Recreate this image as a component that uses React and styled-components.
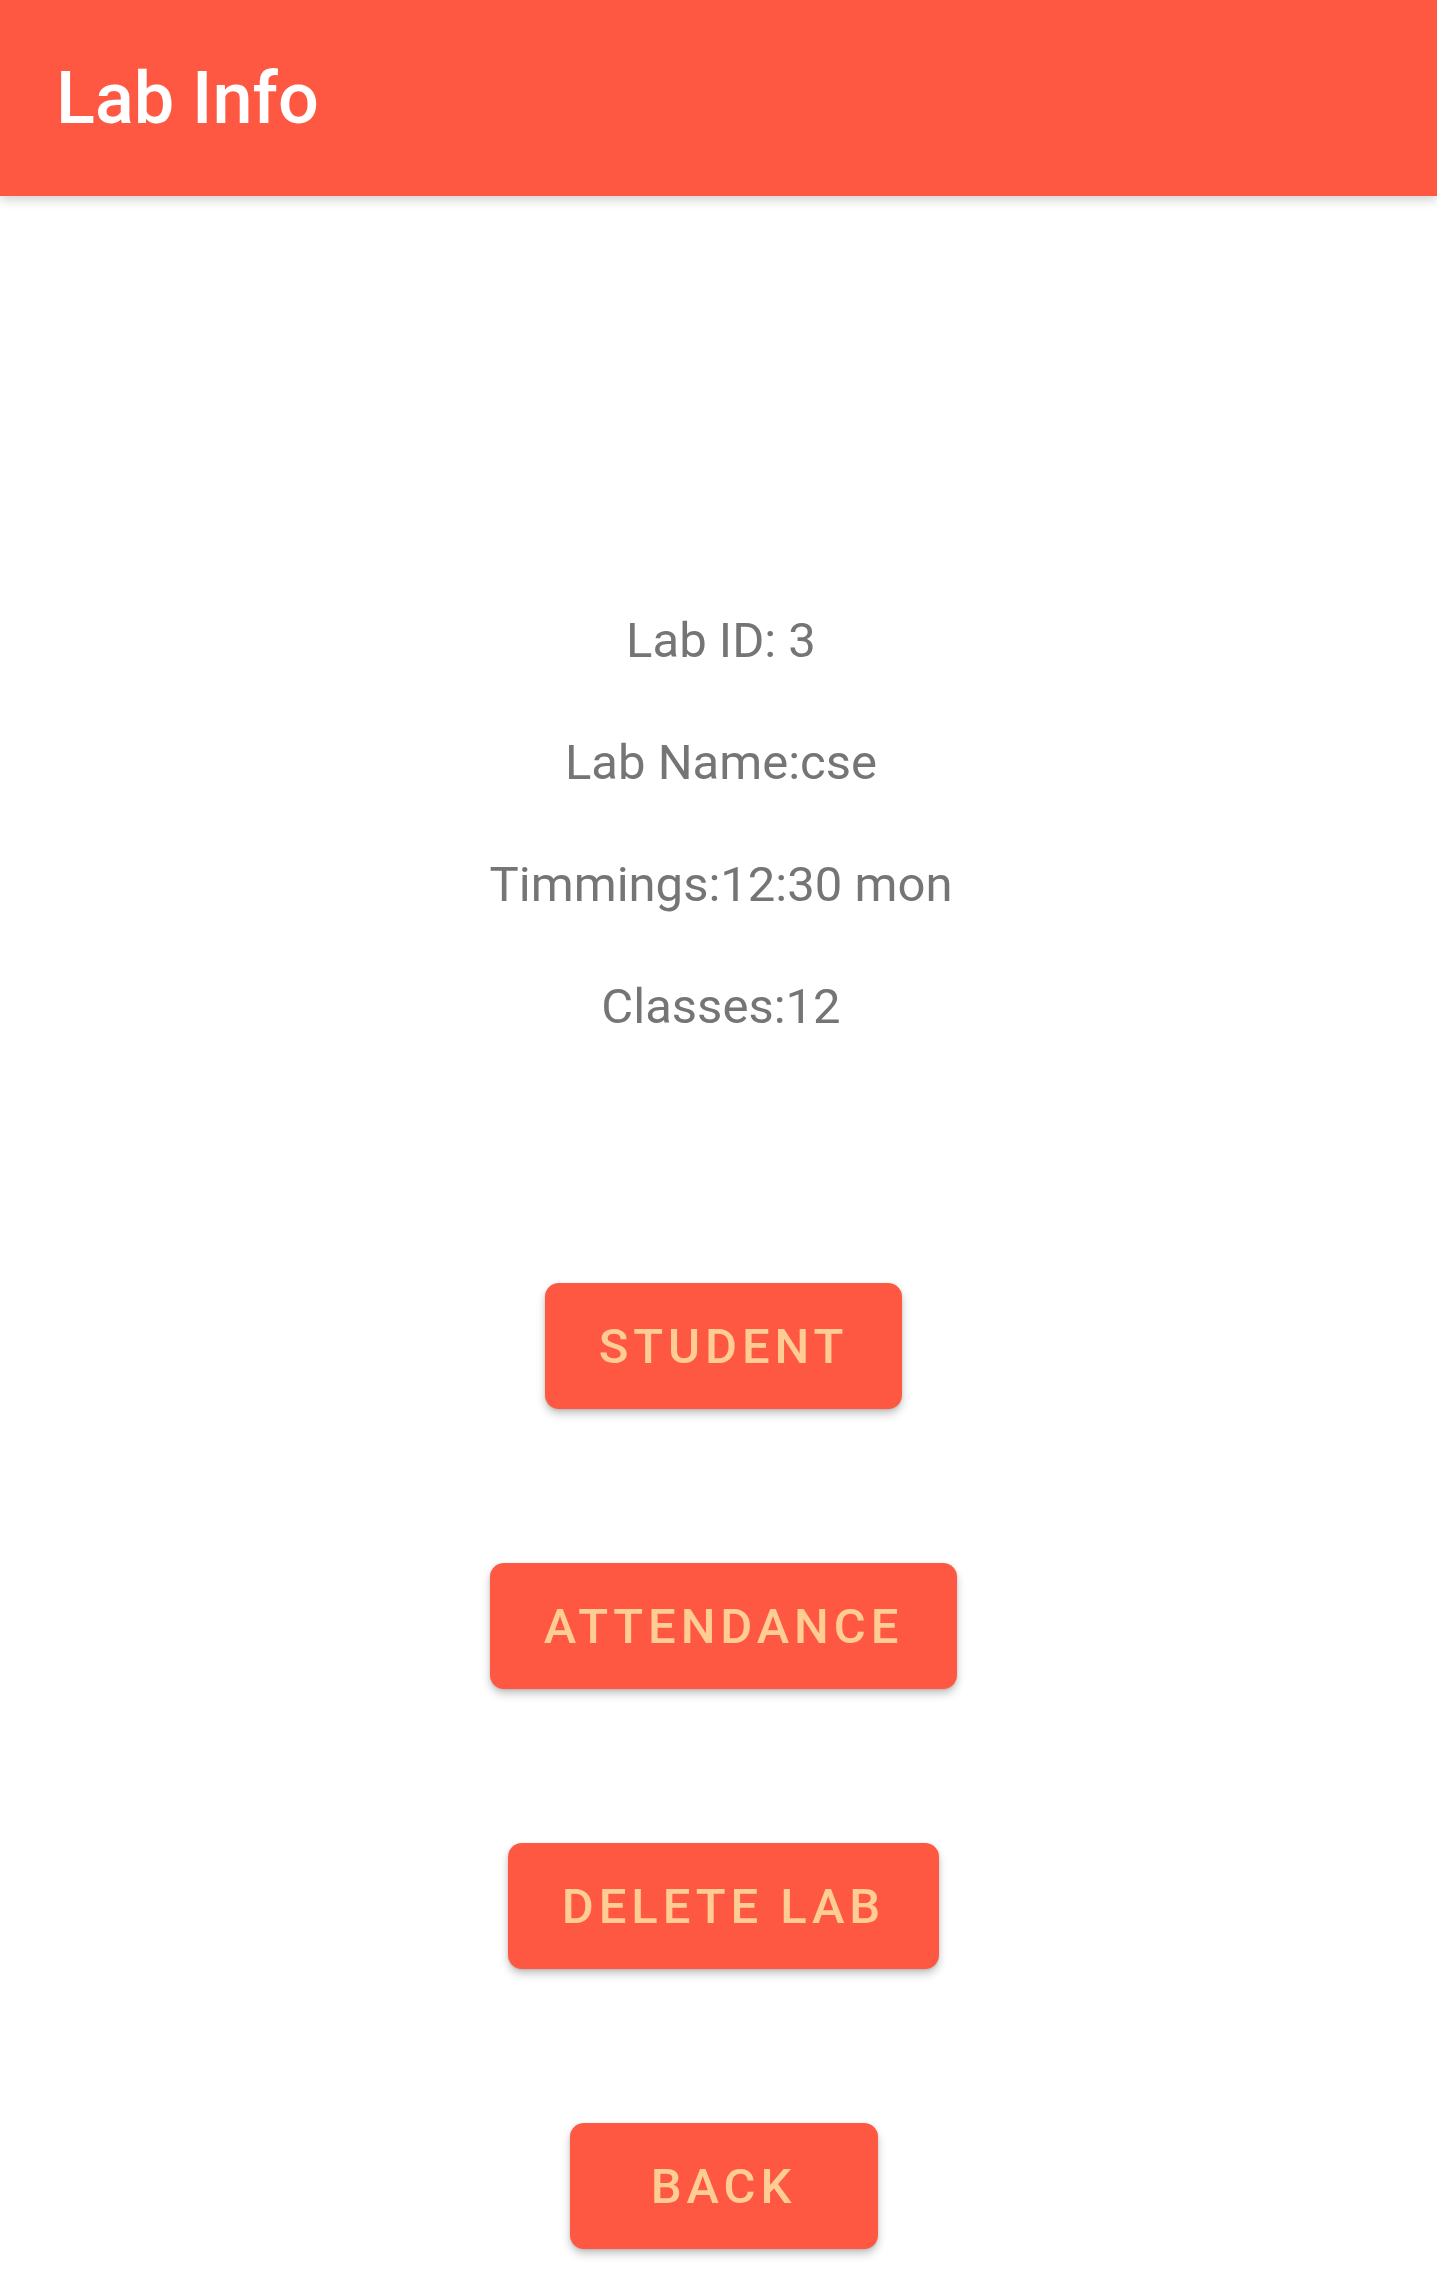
import React from "react";
import styled, { createGlobalStyle } from "styled-components";

const GlobalStyle = createGlobalStyle`
  html, body {
    margin: 0;
    padding: 0;
    background: #ffffff;
    font-family: Roboto, "Noto Sans", "Liberation Sans", sans-serif;
  }
`;

const Screen = styled.div`
  width: 1437px;
  min-height: 2292px;
  background: #ffffff;
  display: flex;
  flex-direction: column;
`;

const AppBar = styled.header`
  height: 196px;
  background-color: #ff5842;
  display: flex;
  align-items: center;
  padding-left: 56px;
  box-shadow: 0 4px 10px rgba(0, 0, 0, 0.18);
  position: relative;
  z-index: 1;
`;

const Title = styled.h1`
  margin: 0;
  color: #ffffff;
  font-size: 72px;
  font-weight: 500;
  letter-spacing: 0;
`;

const InfoList = styled.section`
  display: flex;
  flex-direction: column;
  align-items: center;
  padding-top: 415px;
  padding-left: 5px;
  gap: 62px;
`;

const InfoLine = styled.p`
  margin: 0;
  font-size: 49px;
  line-height: 60px;
  color: #757575;
`;

const Actions = styled.div`
  display: flex;
  flex-direction: column;
  align-items: center;
  padding-top: 246px;
  padding-left: 10px;
  gap: 154px;
`;

const ActionButton = styled.button`
  height: 126px;
  min-width: 308px;
  padding: 0 54px;
  border: none;
  border-radius: 14px;
  background-color: #ff5842;
  color: #fecd96;
  font-family: inherit;
  font-size: 49px;
  font-weight: 500;
  letter-spacing: 0.1em;
  text-transform: uppercase;
  box-shadow: 0 5px 8px rgba(0, 0, 0, 0.22), 0 1px 3px rgba(0, 0, 0, 0.12);
  cursor: pointer;
`;

const info = ["Lab ID: 3", "Lab Name:cse", "Timmings:12:30 mon", "Classes:12"];
const actions = ["Student", "Attendance", "Delete Lab", "Back"];

function App() {
  return (
    <Screen>
      <GlobalStyle />
      <AppBar>
        <Title>Lab Info</Title>
      </AppBar>
      <InfoList>
        {info.map((line) => (
          <InfoLine key={line}>{line}</InfoLine>
        ))}
      </InfoList>
      <Actions>
        {actions.map((label) => (
          <ActionButton key={label}>{label}</ActionButton>
        ))}
      </Actions>
    </Screen>
  );
}

export default App;
